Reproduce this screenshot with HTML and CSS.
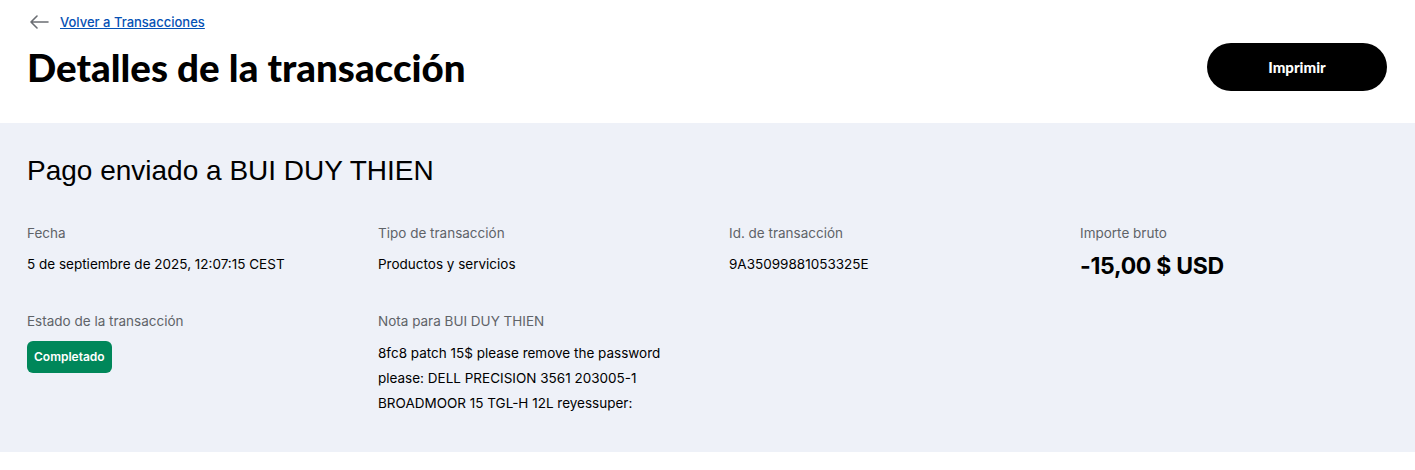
FILE: index.html
```html
<!DOCTYPE html>
<html lang="es">
<head>
    <meta charset="UTF-8">
    <meta name="viewport" content="width=device-width, initial-scale=1.0">
    <title>Detalles de la transacción</title>
    <link rel="stylesheet" href="styles.css">
</head>
<body>
    <header class="page-header">
        <a href="#" class="back-link">
            <svg class="back-arrow" width="20" height="14" viewBox="0 0 20 14" aria-hidden="true">
                <path d="M19 7H2M8 1L2 7l6 6" fill="none" stroke="#6b6e73" stroke-width="1.6" stroke-linecap="round" stroke-linejoin="round"/>
            </svg>
            <span>Volver a Transacciones</span>
        </a>
        <div class="title-row">
            <h1>Detalles de la transacción</h1>
            <button class="print-btn">Imprimir</button>
        </div>
    </header>

    <main class="details">
        <h2>Pago enviado a BUI DUY THIEN</h2>
        <div class="detail-grid">
            <div class="item">
                <div class="label">Fecha</div>
                <div class="value">5 de septiembre de 2025, 12:07:15 CEST</div>
            </div>
            <div class="item">
                <div class="label">Tipo de transacción</div>
                <div class="value">Productos y servicios</div>
            </div>
            <div class="item">
                <div class="label">Id. de transacción</div>
                <div class="value">9A35099881053325E</div>
            </div>
            <div class="item">
                <div class="label">Importe bruto</div>
                <div class="value amount">-15,00 $ USD</div>
            </div>
            <div class="item">
                <div class="label">Estado de la transacción</div>
                <span class="badge">Completado</span>
            </div>
            <div class="item">
                <div class="label">Nota para BUI DUY THIEN</div>
                <div class="value note">8fc8 patch 15$ please remove the password<br>please: DELL PRECISION 3561 203005-1<br>BROADMOOR 15 TGL-H 12L reyessuper:</div>
            </div>
        </div>
    </main>
</body>
</html>
```

FILE: styles.css
```css
body {
    margin: 0;
    font-family: Inter, "Liberation Sans", sans-serif;
    background-color: #fff;
    color: #000;
}

.page-header {
    padding: 13px 28px 32px 27px;
}

.back-link {
    display: inline-flex;
    align-items: center;
    gap: 11px;
    color: #0551b5;
    font-size: 13px;
    font-weight: 500;
    text-decoration: underline;
    margin-left: 2px;
}

.title-row {
    display: flex;
    justify-content: space-between;
    align-items: center;
    margin-top: 10px;
}

h1 {
    margin: 0;
    font-family: Lato, sans-serif;
    font-weight: 900;
    font-size: 38.5px;
}

.print-btn {
    width: 180px;
    height: 48px;
    background: #000;
    color: #fff;
    border: none;
    border-radius: 24px;
    font-family: Lato, sans-serif;
    font-weight: 900;
    font-size: 15px;
    cursor: pointer;
}

.details {
    background-color: #eef1f8;
    padding: 32px 27px 36px;
}

h2 {
    margin: 0 0 38px;
    font-family: "Liberation Sans", Arial, sans-serif;
    font-weight: 400;
    font-size: 28px;
}

.detail-grid {
    display: grid;
    grid-template-columns: repeat(4, 1fr);
    column-gap: 43px;
    row-gap: 33px;
}

.label {
    color: #5f6368;
    font-size: 13.5px;
    margin-bottom: 15px;
}

.value {
    font-size: 13.5px;
}

.amount {
    font-size: 23px;
    font-weight: 700;
    margin-top: -4px;
    letter-spacing: -0.3px;
}

.note {
    line-height: 25px;
    margin-top: -3px;
}

.badge {
    display: inline-block;
    margin-top: -3px;
    background-color: #00875a;
    color: #fff;
    font-size: 12px;
    line-height: 14px;
    font-weight: 600;
    padding: 9px 7px;
    border-radius: 6px;
}
```
